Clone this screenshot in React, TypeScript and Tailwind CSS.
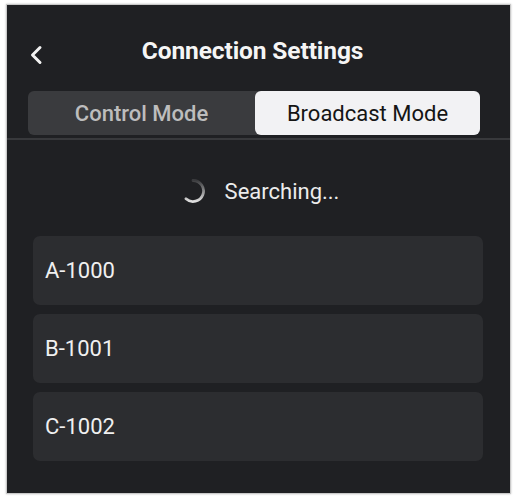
const devices = ["A-1000", "B-1001", "C-1002"];

const Spinner = () => (
  <svg width="26" height="26" viewBox="0 0 26 26" fill="none">
    <defs>
      <linearGradient id="spin" x1="0" y1="0" x2="0" y2="1">
        <stop offset="0" stopColor="#d8d8d8" stopOpacity="0.15" />
        <stop offset="1" stopColor="#e0e0e0" />
      </linearGradient>
    </defs>
    <path
      d="M13 2.5 A10.5 10.5 0 1 1 6 20.8"
      stroke="url(#spin)"
      strokeWidth="2.8"
      strokeLinecap="round"
    />
  </svg>
);

export default function App() {
  return (
    <div
      className="w-[515px] h-[498px] bg-white pt-[4px] pl-[6px]"
      style={{ fontFamily: "Roboto, 'Liberation Sans', sans-serif" }}
    >
      <div className="w-[505px] h-[490px] bg-[#1f2023] border border-[#c9c9c9] shadow-[0_0_2px_rgba(0,0,0,0.25)] flex flex-col">
        {/* header */}
        <div className="relative h-[86px] pt-[7px] pr-[12px] flex items-center justify-center">
          <button className="absolute left-[22px] top-[40px] text-[#f2f2f2]">
            <svg width="14" height="20" viewBox="0 0 14 20" fill="none">
              <path
                d="M11 2.5 L3.5 10 L11 17.5"
                stroke="currentColor"
                strokeWidth="3"
                strokeLinecap="round"
                strokeLinejoin="round"
              />
            </svg>
          </button>
          <div className="text-[24.5px] font-bold text-[#f5f5f5] tracking-[-0.1px]">
            Connection Settings
          </div>
        </div>

        {/* tabs */}
        <div className="ml-[21px] w-[452px] h-[44px] flex rounded-[6px] bg-[#3a3b3e]">
          <div className="w-[227px] flex items-center justify-center text-[22px] text-[#bdbdbd] font-medium">
            Control Mode
          </div>
          <div className="flex-1 flex items-center justify-center rounded-[6px] bg-[#f2f2f4] text-[22px] text-[#151515]">
            Broadcast Mode
          </div>
        </div>

        <div className="mt-[3px] h-[2px] bg-[#38393c]" />

        {/* searching */}
        <div className="mt-[31px] h-[40px] flex items-center justify-center gap-[19px] pl-[2px]">
          <Spinner />
          <span className="text-[22px] text-[#ececec]">Searching...</span>
        </div>

        {/* device list */}
        <div className="mt-[25px] ml-[26px] w-[450px] flex flex-col gap-[9px]">
          {devices.map((d) => (
            <div
              key={d}
              className="h-[69px] rounded-[7px] bg-[#2c2d30] flex items-center pl-[12px] text-[22px] text-[#f0f0f0]"
            >
              {d}
            </div>
          ))}
        </div>
      </div>
    </div>
  );
}
